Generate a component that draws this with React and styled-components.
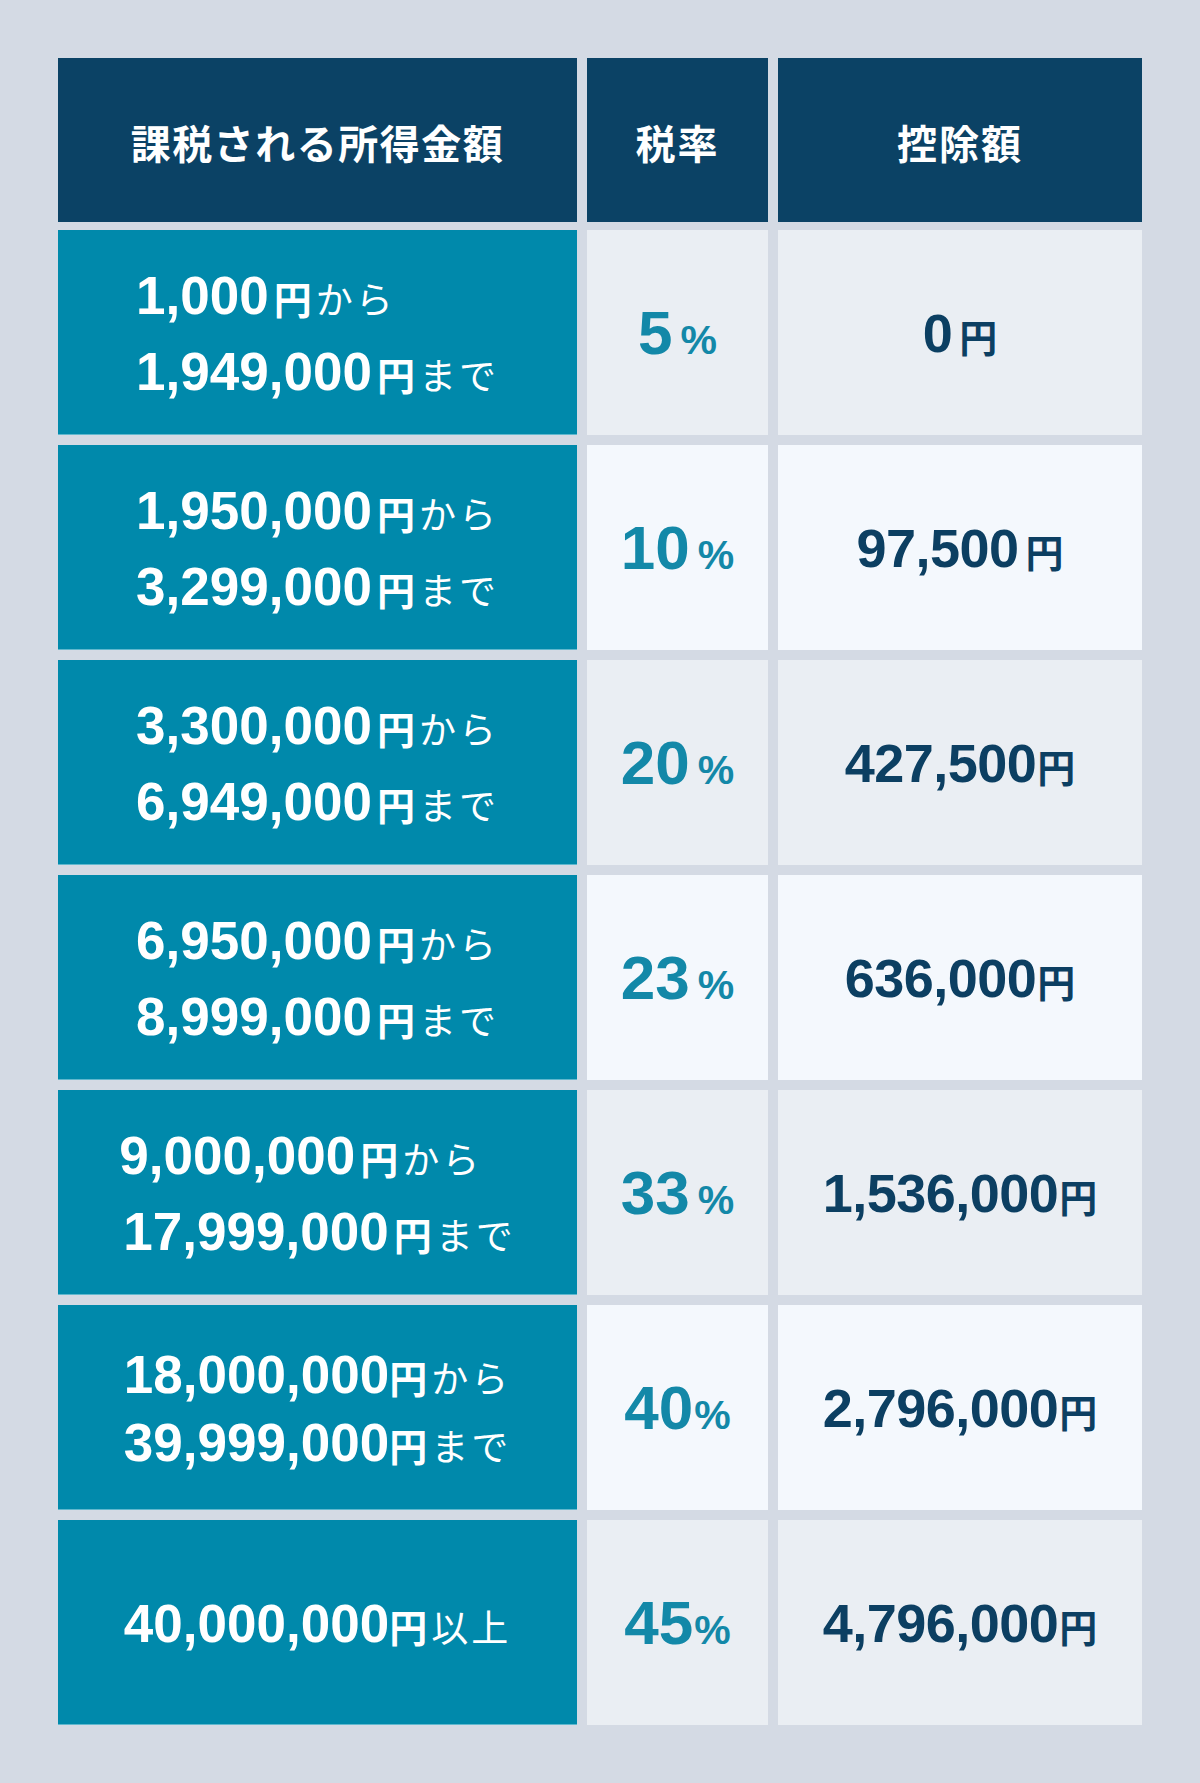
import React from 'react';
import styled, { createGlobalStyle } from 'styled-components';

const GlobalStyle = createGlobalStyle`
  html, body {
    margin: 0;
    padding: 0;
    background: #d4dae4;
  }
  body {
    font-family: "Liberation Sans", "Noto Sans CJK JP", sans-serif;
  }
`;

const Page = styled.div`
  padding: 58px;
  min-height: 1783px;
  box-sizing: border-box;
  background: #d4dae4;
`;

const Table = styled.div`
  display: flex;
  flex-direction: column;
  gap: 8px;
  width: 1084px;
`;

const Grid = styled.div`
  display: grid;
  grid-template-columns: 519px 181px 364px;
  column-gap: 10px;
  row-gap: 10px;
`;

const HeadCell = styled.div`
  height: 164px;
  display: flex;
  align-items: center;
  justify-content: center;
  background: #0b4265;
  color: #ffffff;
  font-family: "Noto Sans CJK JP", sans-serif;
  font-weight: 700;
  font-size: 40px;
  letter-spacing: ${(p) => (p.wide ? '1.5px' : '2px')};
  padding-top: 3px;
  box-sizing: border-box;
`;

const RangeCell = styled.div`
  height: 205px;
  display: flex;
  align-items: center;
  justify-content: center;
  background: #0089ab;
  box-shadow: inset 0 -1px 0 rgba(160, 215, 230, 0.6);
  color: #ffffff;
`;

const RangeText = styled.div`
  display: inline-block;
  text-align: left;
  font-family: "Liberation Sans", Arial, sans-serif;
  font-size: 53px;
  line-height: ${(p) => (p.tight ? '66px' : '74px')};
  white-space: nowrap;
  padding-top: 4px;
`;

const Line = styled.div`
  display: block;
  padding-left: ${(p) => p.indent || 0}px;
`;

const Num = styled.span`
  font-family: "Liberation Sans", Arial, sans-serif;
  font-weight: 700;
  font-size: 53px;
`;

const Yen = styled.span`
  font-family: "Noto Sans CJK JP", sans-serif;
  font-weight: 700;
  font-size: 38px;
  margin-left: ${(p) => (p.tight ? '0' : '5px')};
`;

const Kana = styled.span`
  font-family: "Noto Sans CJK JP", sans-serif;
  font-weight: 400;
  font-size: 37px;
  margin-left: 4px;
  letter-spacing: 3px;
`;

const ValueCell = styled.div`
  height: 205px;
  display: flex;
  align-items: center;
  justify-content: center;
  background: ${(p) => (p.alt ? '#f4f8fd' : '#eaeef3')};
`;

const ValueInner = styled.div`
  display: flex;
  align-items: baseline;
  justify-content: center;
  white-space: nowrap;
  color: ${(p) => p.color};
`;

const RateNum = styled.span`
  font-family: "Liberation Sans", Arial, sans-serif;
  font-weight: 700;
  font-size: 62px;
  line-height: 1;
`;

const Percent = styled.span`
  font-family: "Liberation Sans", Arial, sans-serif;
  font-weight: 700;
  font-size: 41px;
  line-height: 1;
  margin-left: ${(p) => (p.tight ? '1px' : '8px')};
`;

const DeductNum = styled.span`
  font-family: "Liberation Sans", Arial, sans-serif;
  font-weight: 700;
  font-size: 54px;
  letter-spacing: -0.5px;
  line-height: 1;
`;

const DeductYen = styled.span`
  font-family: "Noto Sans CJK JP", sans-serif;
  font-weight: 700;
  font-size: 38px;
  line-height: 1;
  margin-left: ${(p) => (p.tight ? '1px' : '7px')};
`;

const rows = [
  { from: '1,000', to: '1,949,000', rate: '5', deduct: '0' },
  { from: '1,950,000', to: '3,299,000', rate: '10', deduct: '97,500' },
  { from: '3,300,000', to: '6,949,000', rate: '20', deduct: '427,500', tightYen: true },
  { from: '6,950,000', to: '8,999,000', rate: '23', deduct: '636,000', tightYen: true },
  { from: '9,000,000', to: '17,999,000', rate: '33', deduct: '1,536,000', tightYen: true, indent: 4 },
  { from: '18,000,000', to: '39,999,000', rate: '40', deduct: '2,796,000', tight: true, tightYen: true },
  { from: '40,000,000', rate: '45', deduct: '4,796,000', tight: true, tightYen: true },
];

function Range({ row }) {
  if (!row.to) {
    return (
      <RangeText tight={row.tight}>
        <Line>
          <Num>{row.from}</Num>
          <Yen tight>円</Yen>
          <Kana>以上</Kana>
        </Line>
      </RangeText>
    );
  }
  return (
    <RangeText tight={row.tight}>
      <Line>
        <Num>{row.from}</Num>
        <Yen tight={row.tight}>円</Yen>
        <Kana>から</Kana>
      </Line>
      <Line indent={row.indent}>
        <Num>{row.to}</Num>
        <Yen tight={row.tight}>円</Yen>
        <Kana>まで</Kana>
      </Line>
    </RangeText>
  );
}

export default function App() {
  return (
    <Page>
      <GlobalStyle />
      <Table>
        <Grid>
          <HeadCell wide>課税される所得金額</HeadCell>
          <HeadCell>税率</HeadCell>
          <HeadCell>控除額</HeadCell>
        </Grid>
        <Grid>
          {rows.map((row, i) => (
            <React.Fragment key={row.from}>
              <RangeCell>
                <Range row={row} />
              </RangeCell>
              <ValueCell alt={i % 2 === 1}>
                <ValueInner color="#1388a8">
                  <RateNum>{row.rate}</RateNum>
                  <Percent tight={row.tight}>%</Percent>
                </ValueInner>
              </ValueCell>
              <ValueCell alt={i % 2 === 1}>
                <ValueInner color="#0c3f62">
                  <DeductNum>{row.deduct}</DeductNum>
                  <DeductYen tight={row.tightYen}>円</DeductYen>
                </ValueInner>
              </ValueCell>
            </React.Fragment>
          ))}
        </Grid>
      </Table>
    </Page>
  );
}
